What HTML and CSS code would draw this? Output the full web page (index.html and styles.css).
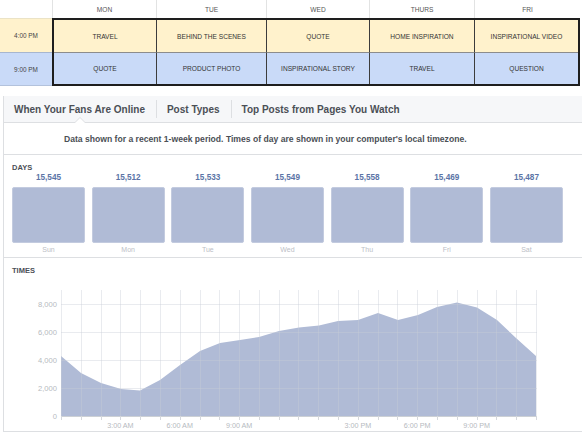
FILE: index.html
```html
<!DOCTYPE html>
<html>
<head>
<meta charset="utf-8">
<link rel="stylesheet" href="styles.css">
</head>
<body>
<div class="sheet">
  <div class="sheet-head">
    <div class="corner"></div>
    <div class="colhead w1">MON</div>
    <div class="colhead w2">TUE</div>
    <div class="colhead w3">WED</div>
    <div class="colhead w4">THURS</div>
    <div class="colhead w5">FRI</div>
  </div>
  <div class="sheet-body">
    <div class="labels">
      <div class="lab yel">4:00 PM</div>
      <div class="lab blu">9:00 PM</div>
    </div>
    <div class="box">
      <div class="cell yel">TRAVEL</div>
      <div class="cell yel vl">BEHIND THE SCENES</div>
      <div class="cell yel vl">QUOTE</div>
      <div class="cell yel vl">HOME INSPIRATION</div>
      <div class="cell yel vl">INSPIRATIONAL VIDEO</div>
      <div class="cell blu hl">QUOTE</div>
      <div class="cell blu hl vl">PRODUCT PHOTO</div>
      <div class="cell blu hl vl">INSPIRATIONAL STORY</div>
      <div class="cell blu hl vl">TRAVEL</div>
      <div class="cell blu hl vl">QUESTION</div>
    </div>
  </div>
</div>

<div class="panel">
  <div class="tabs">
    <div class="tab active">When Your Fans Are Online</div>
    <div class="sep"></div>
    <div class="tab">Post Types</div>
    <div class="sep"></div>
    <div class="tab">Top Posts from Pages You Watch</div>
  </div>
  <div class="info">Data shown for a recent 1-week period. Times of day are shown in your computer's local timezone.</div>

  <div class="days">
    <div class="sec-label">DAYS</div>
    <div class="day-grid">
      <div class="day"><div class="num">15,545</div><div class="bar"></div><div class="dname">Sun</div></div>
      <div class="day"><div class="num">15,512</div><div class="bar"></div><div class="dname">Mon</div></div>
      <div class="day"><div class="num">15,533</div><div class="bar"></div><div class="dname">Tue</div></div>
      <div class="day"><div class="num">15,549</div><div class="bar"></div><div class="dname">Wed</div></div>
      <div class="day"><div class="num">15,558</div><div class="bar"></div><div class="dname">Thu</div></div>
      <div class="day"><div class="num">15,469</div><div class="bar"></div><div class="dname">Fri</div></div>
      <div class="day"><div class="num">15,487</div><div class="bar"></div><div class="dname">Sat</div></div>
    </div>
  </div>

  <div class="times">
    <div class="sec-label">TIMES</div>
    <svg class="chart" width="578" height="156" viewBox="4 275 578 156" xmlns="http://www.w3.org/2000/svg">
      <path d="M61,416 L61,356 L81,373 L101,383 L121,389 L140,390.5 L160,380 L180,365 L200,351 L220,343 L240,340 L259,337 L279,331 L299,327.5 L319,325.5 L338,321 L358,320 L378,313 L398,320 L418,315 L437,307 L457,302.5 L477,307.5 L497,320 L516,338 L536,356 L536,416 Z" fill="#b0bbd6"/>
      <path class="grid" d="M61.5 290V416M81.5 290V416M101.5 290V416M120.5 290V416M140.5 290V416M160.5 290V416M180.5 290V416M200.5 290V416M219.5 290V416M239.5 290V416M259.5 290V416M279.5 290V416M298.5 290V416M318.5 290V416M338.5 290V416M358.5 290V416M378.5 290V416M397.5 290V416M417.5 290V416M437.5 290V416M457.5 290V416M477.5 290V416M496.5 290V416M516.5 290V416M536.5 290V416M61 304.5H537M61 332.5H537M61 360.5H537M61 388.5H537"/>
      <path class="axis" d="M61 416.5H537"/>
      <path class="ticks" d="M61.5 416V420M81.5 416V420M101.5 416V420M120.5 416V420M140.5 416V420M160.5 416V420M180.5 416V420M200.5 416V420M219.5 416V420M239.5 416V420M259.5 416V420M279.5 416V420M298.5 416V420M318.5 416V420M338.5 416V420M358.5 416V420M378.5 416V420M397.5 416V420M417.5 416V420M437.5 416V420M457.5 416V420M477.5 416V420M496.5 416V420M516.5 416V420M536.5 416V420"/>
      <g class="ylab">
        <text x="57" y="306.7">8,000</text>
        <text x="57" y="334.7">6,000</text>
        <text x="57" y="362.7">4,000</text>
        <text x="57" y="390.7">2,000</text>
        <text x="57" y="418.7">0</text>
      </g>
      <g class="xlab">
        <text x="120.4" y="427.6">3:00 AM</text>
        <text x="179.7" y="427.6">6:00 AM</text>
        <text x="239.1" y="427.6">9:00 AM</text>
        <text x="357.9" y="427.6">3:00 PM</text>
        <text x="417.2" y="427.6">6:00 PM</text>
        <text x="476.6" y="427.6">9:00 PM</text>
      </g>
    </svg>
  </div>
</div>
</body>
</html>
```

FILE: styles.css
```css
html, body {
  margin: 0;
  padding: 0;
  background: #ffffff;
}
body {
  width: 582px;
  height: 434px;
  overflow: hidden;
  font-family: "Liberation Sans", Arial, sans-serif;
}

/* spreadsheet */
.sheet {
  width: 580px;
}
.sheet-head {
  display: flex;
  height: 18px;
}
.corner {
  width: 52px;
}
.colhead {
  box-sizing: border-box;
  border-left: 1px solid #e2e3e3;
  display: flex;
  align-items: center;
  justify-content: center;
  font-size: 6.6px;
  color: #555555;
}
.w1 { width: 104px; }
.w2 { width: 110px; }
.w3 { width: 103px; }
.w4 { width: 105px; }
.w5 { width: 106px; }

.sheet-body {
  display: flex;
}
.labels {
  width: 52px;
}
.lab {
  box-sizing: border-box;
  height: 34px;
  display: flex;
  align-items: center;
  justify-content: center;
  font-size: 6.4px;
  color: #444444;
}
.lab.yel {
  border-top: 1px solid #ebe3c6;
}
.lab.blu {
  border-top: 1px solid #a7b6cf;
  border-bottom: 1px solid #b3c2dc;
}
.yel { background: #fff2cc; }
.blu { background: #c9daf8; }

.box {
  box-sizing: border-box;
  width: 528px;
  height: 68px;
  border: 2px solid #1e1e1e;
  display: grid;
  grid-template-columns: 102px 110px 103px 105px 104px;
  grid-template-rows: 32px 32px;
}
.cell {
  box-sizing: border-box;
  display: flex;
  align-items: center;
  justify-content: center;
  font-size: 6.6px;
  color: #333333;
}
.cell.vl { border-left: 1px solid #3c3c3c; }
.cell.hl { border-top: 1px solid #8c8c8c; }

/* insights panel */
.panel {
  margin-top: 10px;
  margin-left: 3px;
  border-left: 1px solid #dddfe2;
}
.tabs {
  box-sizing: border-box;
  height: 27px;
  background: #f6f7f9;
  border-bottom: 1px solid #dddfe2;
  display: flex;
  align-items: stretch;
}
.tab {
  position: relative;
  display: flex;
  align-items: center;
  padding: 0 11px 0 10px;
  font-size: 10px;
  font-weight: bold;
  color: #4b4f56;
  white-space: nowrap;
}
.sep {
  width: 1px;
  height: 18px;
  align-self: center;
  background: #dddfe2;
}
.tab.active::before,
.tab.active::after {
  content: "";
  position: absolute;
  left: 50%;
  width: 0;
  height: 0;
  border-style: solid;
  border-color: transparent;
}
.tab.active::before {
  bottom: -1px;
  margin-left: -6px;
  border-width: 0 6px 6px 6px;
  border-bottom-color: #dddfe2;
}
.tab.active::after {
  bottom: -1px;
  margin-left: -5px;
  border-width: 0 5px 5px 5px;
  border-bottom-color: #ffffff;
}

.info {
  box-sizing: border-box;
  height: 32px;
  border-bottom: 1px solid #dddfe2;
  display: flex;
  align-items: center;
  padding-left: 60px;
  font-size: 8.6px;
  font-weight: bold;
  color: #4b4f56;
  white-space: nowrap;
}

.sec-label {
  height: 9px;
  line-height: 9px;
  font-size: 7.5px;
  font-weight: bold;
  color: #4b4f56;
}

.days {
  box-sizing: border-box;
  height: 103px;
  padding: 8px 0 0 8px;
  border-bottom: 1px solid #dddfe2;
}
.day-grid {
  display: grid;
  grid-template-columns: repeat(7, 73px);
  column-gap: 6.67px;
}
.day {
  display: flex;
  flex-direction: column;
  align-items: stretch;
}
.num {
  height: 12px;
  line-height: 12px;
  text-align: center;
  font-size: 8.2px;
  font-weight: bold;
  color: #5b74a6;
}
.bar {
  box-sizing: border-box;
  margin-top: 3px;
  height: 56px;
  background: #b0bbd6;
  border: 1px solid #c3cbdf;
  border-radius: 2px;
}
.dname {
  height: 14px;
  line-height: 14px;
  text-align: center;
  font-size: 7px;
  color: #bcc0c6;
}

.times {
  box-sizing: border-box;
  height: 174px;
  padding: 8px 0 0 8px;
  border-bottom: 1px solid #dddfe2;
}
.times .chart {
  display: block;
  margin-left: -8px;
}
.grid {
  fill: none;
  stroke: rgba(200, 205, 215, 0.4);
  stroke-width: 1;
}
.axis {
  fill: none;
  stroke: #ccd0d5;
  stroke-width: 1;
}
.ticks {
  fill: none;
  stroke: #d5d8dd;
  stroke-width: 1;
}
.ylab text {
  font-family: "Liberation Sans", Arial, sans-serif;
  font-size: 7.6px;
  fill: #b6bac0;
  text-anchor: end;
}
.xlab text {
  font-family: "Liberation Sans", Arial, sans-serif;
  font-size: 7.2px;
  fill: #b6bac0;
  text-anchor: middle;
}
```
